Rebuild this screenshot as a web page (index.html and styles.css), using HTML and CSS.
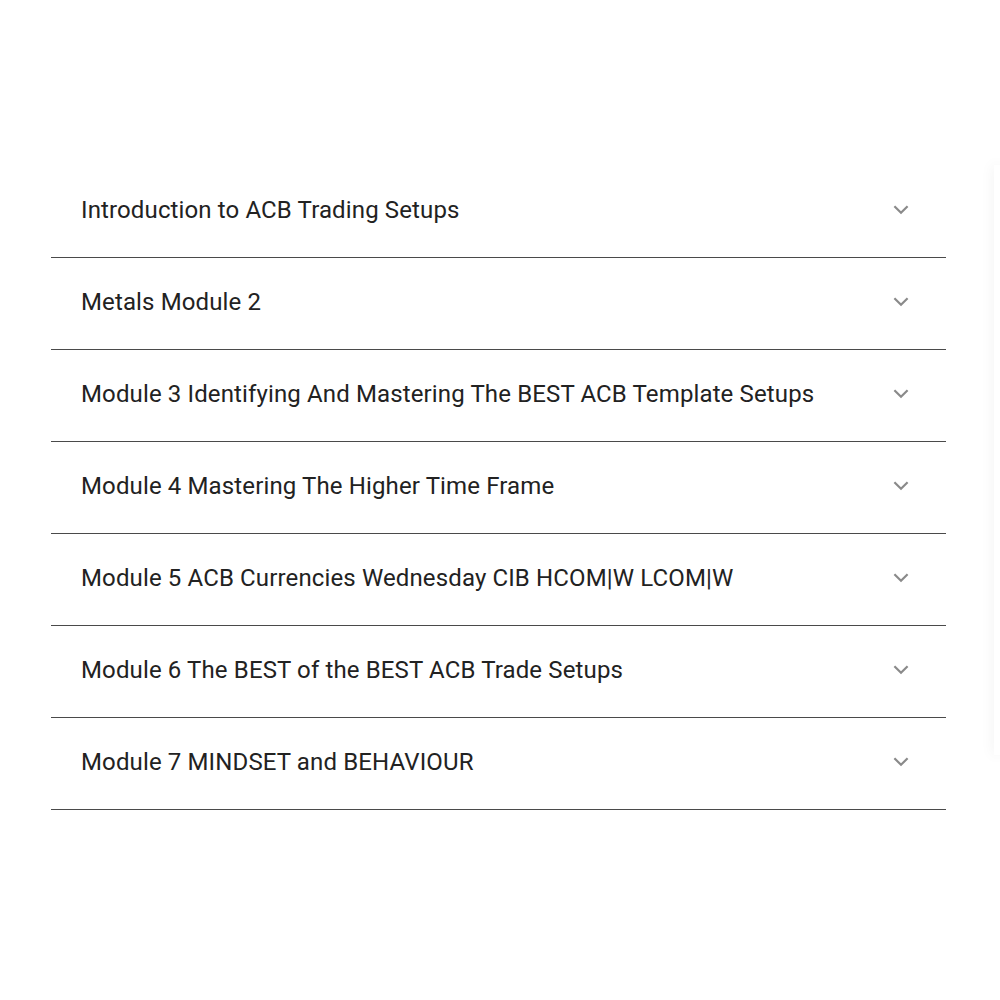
FILE: index.html
```html
<!DOCTYPE html>
<html lang="en">
<head>
    <meta charset="UTF-8">
    <meta name="viewport" content="width=device-width, initial-scale=1.0">
    <title>Course Modules</title>
    <link rel="stylesheet" href="styles.css">
</head>
<body>
    <div class="side-panel"></div>
    <div class="accordion">
        <div class="item">
            <span class="title">Introduction to ACB Trading Setups</span>
            <svg class="chevron" viewBox="0 0 16 10"><path d="M2 2l6 6 6-6"/></svg>
        </div>
        <div class="item">
            <span class="title">Metals Module 2</span>
            <svg class="chevron" viewBox="0 0 16 10"><path d="M2 2l6 6 6-6"/></svg>
        </div>
        <div class="item">
            <span class="title">Module 3 Identifying And Mastering The BEST ACB Template Setups</span>
            <svg class="chevron" viewBox="0 0 16 10"><path d="M2 2l6 6 6-6"/></svg>
        </div>
        <div class="item">
            <span class="title">Module 4 Mastering The Higher Time Frame</span>
            <svg class="chevron" viewBox="0 0 16 10"><path d="M2 2l6 6 6-6"/></svg>
        </div>
        <div class="item">
            <span class="title">Module 5 ACB Currencies Wednesday CIB HCOM|W LCOM|W</span>
            <svg class="chevron" viewBox="0 0 16 10"><path d="M2 2l6 6 6-6"/></svg>
        </div>
        <div class="item">
            <span class="title">Module 6 The BEST of the BEST ACB Trade Setups</span>
            <svg class="chevron" viewBox="0 0 16 10"><path d="M2 2l6 6 6-6"/></svg>
        </div>
        <div class="item">
            <span class="title">Module 7 MINDSET and BEHAVIOUR</span>
            <svg class="chevron" viewBox="0 0 16 10"><path d="M2 2l6 6 6-6"/></svg>
        </div>
    </div>
</body>
</html>
```

FILE: styles.css
```css
body {
    font-family: 'Roboto', 'Liberation Sans', sans-serif;
    background: #fff;
    color: #222;
    margin: 0;
    padding: 0;
    overflow: hidden;
}
.accordion {
    width: 895px;
    margin: 166px 0 0 51px;
}
.item {
    height: 87px;
    border-bottom: 1px solid #4a4a4a;
    display: flex;
    align-items: center;
    justify-content: space-between;
    padding: 0 36px 4px 30px;
}
.title {
    font-size: 24px;
    letter-spacing: 0.13px;
    color: #222;
}
.chevron {
    width: 18px;
    height: 11px;
    fill: none;
    stroke: #8a8a8a;
    stroke-width: 2;
}
.side-panel {
    position: absolute;
    top: 165px;
    left: 994px;
    width: 6px;
    height: 590px;
    background: #fff;
    box-shadow: 0 0 14px rgba(0, 0, 0, 0.08);
}
```
